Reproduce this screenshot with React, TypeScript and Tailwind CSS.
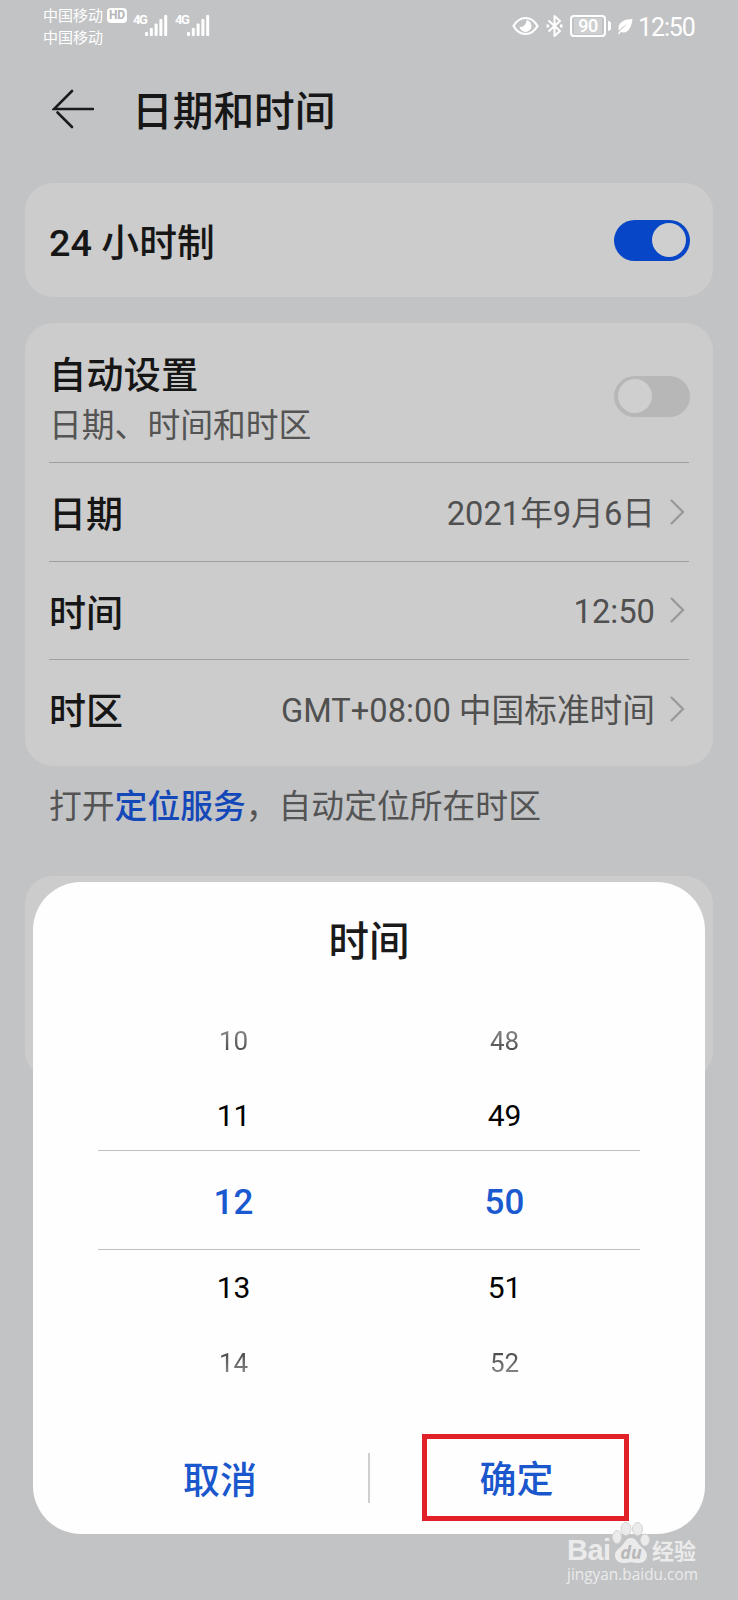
import type { ReactNode } from 'react'

const hours = ['10', '11', '12', '13', '14']
const minutes = ['48', '49', '50', '51', '52']

// one entry per wheel position, from top to bottom
const wheelStyles = [
  'h-[66px] text-[26px] text-transparent bg-clip-text bg-linear-to-b from-[#999] from-25% to-[#333] to-80%',
  'h-[84px] text-[30px] text-black',
  'h-[88px] text-[35px] font-medium text-[#1a59d0]',
  'h-[84px] text-[30px] text-black',
  'h-[66px] text-[26px] text-transparent bg-clip-text bg-linear-to-b from-[#333] from-20% to-[#999] to-75%',
]

function SignalIcon() {
  return (
    <div className="flex h-[22px] w-[35px]">
      <span className="-mt-px h-3 w-[12px] font-[Roboto] text-[13px] leading-[13px] font-bold tracking-[-1.500px]">4G</span>
      <svg width="23" height="22" viewBox="0 0 23 22" fill="#fff">
        <rect x="0" y="18" width="3" height="4" rx="1" />
        <rect x="4.800" y="14" width="3" height="8" rx="1" />
        <rect x="9.600" y="9.500" width="3" height="12.500" rx="1" />
        <rect x="14.400" y="5" width="3" height="17" rx="1" />
        <rect x="19.200" y="1" width="3" height="21" rx="1" />
      </svg>
    </div>
  )
}

function StatusBar() {
  return (
    <div className="flex h-[52px] justify-between pl-[43px] pr-[42px] text-white">
      <div className="flex">
        <div className="flex flex-col pt-1 text-[15px] leading-[22px]">
          <div className="flex items-center">
            <span>中国移动</span>
            <span className="ml-1 flex h-[15px] w-5 items-center justify-center rounded-[4px] bg-white font-[Roboto] text-[12px] leading-none font-bold text-[#b4b5b7]">HD</span>
          </div>
          <span>中国移动</span>
        </div>
        <div className="ml-[6px] flex gap-[7px] pt-[14px]">
          <SignalIcon />
          <SignalIcon />
        </div>
      </div>
      <div className="flex h-[52px] items-center">
        <svg width="27" height="20" viewBox="0 0 27 20" fill="none">
          <path d="M1.500 10C4.500 4.800 8.800 2 13.500 2s9 2.800 12 8c-3 5.200-7.300 8-12 8s-9-2.800-12-8Z" stroke="#fff" strokeWidth="2.200" />
          <path d="M14.500 4a6 6 0 1 1-7 6.500c3 1.500 7-1.500 7-6.500Z" fill="#fff" />
        </svg>
        <svg className="ml-[7px]" width="17" height="24" viewBox="0 0 17 24" fill="none" stroke="#fff" strokeWidth="2" strokeLinejoin="round">
          <path d="M2.500 6.500L14 17l-5.500 5V2L14 7 2.500 17.500" />
          <path d="M.5 12H3M14 12h2.500" strokeWidth="2.800" />
        </svg>
        <div className="ml-[7px] flex h-[22px] w-9 items-center justify-center rounded-[4px] border-2 border-white">
          <span className="flex h-4 w-[28px] items-center justify-center bg-white/20 font-[Roboto] text-[18px] leading-none font-medium tracking-[-0.500px]">90</span>
        </div>
        <div className="ml-[2px] h-[10px] w-[3px] rounded-r-sm bg-white" />
        <svg className="ml-[6px]" width="16" height="17" viewBox="0 0 16 17">
          <path d="M15.500 1C9 .8 1.500 3.500 1.500 10c0 1 .2 2 .6 2.800C4.200 9.800 7 8 10.500 6.500 7 9 3.500 11.500 1 15.500l1.200.7 1.500-2.200C11.500 16.500 14.500 9 15.500 1Z" fill="#fff" />
        </svg>
        <span className="ml-[5px] w-[58px] pt-[3px] font-[Roboto] text-[25px] leading-none tracking-[-1.100px] whitespace-nowrap">12:50</span>
      </div>
    </div>
  )
}

function Toggle({ on }: { on?: boolean }) {
  return (
    <div
      className={`-mr-px flex h-[41px] w-[76px] items-center rounded-full px-1 ${
        on ? 'justify-end bg-[#0746c6]' : 'justify-start bg-[#b7b7b7]'
      }`}
    >
      <div className="size-[34px] rounded-full bg-[#cfcfcf]" />
    </div>
  )
}

function Row({ label, value }: { label: string; value: string }) {
  return (
    <div className="flex h-[98.500px] items-center justify-between border-t border-[#9f9f9f]">
      <span className="pt-[2px] text-[37px] font-medium text-[#161616]">{label}</span>
      <div className="flex items-center text-[#505050]">
        <span className="pt-1 font-[Roboto,'Noto_Sans_CJK_SC'] text-[32.700px] leading-[40px]">{value}</span>
        <svg className="ml-[14px] mr-1" width="16" height="28" viewBox="0 0 16 28" fill="none">
          <path d="M2 2l12 12L2 26" stroke="#999" strokeWidth="2.300" />
        </svg>
      </div>
    </div>
  )
}

function Card({ className, children }: { className: string; children?: ReactNode }) {
  return <div className={`mx-[25px] rounded-[28px] bg-[#ccc] px-6 ${className}`}>{children}</div>
}

function Wheel({ values }: { values: string[] }) {
  return (
    <div className="flex w-[271px] flex-col items-center font-[Roboto]">
      {values.map((value, i) => (
        <div key={value} className={`flex items-center leading-none ${wheelStyles[i]}`}>
          {value}
        </div>
      ))}
    </div>
  )
}

function TimeDialog() {
  return (
    <div className="absolute top-[882px] left-[33px] h-[652px] w-[672px] rounded-[48px] bg-[#fefefe]">
      <h2 className="pt-[27px] text-center text-[40.500px] leading-[60px] font-medium text-[#1a1a1a]">时间</h2>
      <div className="relative mt-[39px] flex justify-center">
        <Wheel values={hours} />
        <Wheel values={minutes} />
        <div className="absolute top-[142px] left-[65px] h-[100px] w-[542px] border-y-[1.500px] border-[#c0c0c0]" />
      </div>
      <div className="mt-[38px] flex h-[87px] items-center text-[37px] font-medium text-[#1a57cd]">
        <button className="ml-[150px] w-[74px] pt-px leading-none whitespace-nowrap">取消</button>
        <div className="ml-[111px] h-[50px] w-[2px] bg-[#cfcfcf]" />
        <button className="ml-[52px] h-[87px] w-[207px] border-[5px] border-[#e22028] pr-[18px] leading-none">确定</button>
      </div>
    </div>
  )
}

function Watermark() {
  return (
    <div className="absolute top-[1520px] left-[567px] w-[134px] text-[#ebebeb]">
      <div className="flex h-[44px] items-end">
        <span className="w-[45px] font-['Liberation_Sans'] text-[29px] leading-[28px] font-bold tracking-[-0.500px]">Bai</span>
        <svg width="38" height="42" viewBox="0 0 38 42" fill="#ebebeb">
          <g stroke="#d3d3d3" strokeWidth="1">
            <ellipse cx="5" cy="15" rx="4.500" ry="6.500" />
            <ellipse cx="14" cy="7" rx="5" ry="6.500" />
            <ellipse cx="25.500" cy="7" rx="5" ry="6.500" />
            <ellipse cx="33" cy="18" rx="4.500" ry="6" />
          </g>
          <path d="M19 16c-5 0-6 4.500-9.500 8S3 29 3 33.500 6.500 41 11 41c3 0 5-.8 8-.8s5 .8 8 .8c4.500 0 8-3 8-7.500s-3-6-6.500-9.500S24 16 19 16Z" />
          <text x="19" y="37" textAnchor="middle" fontFamily="Open Sans, sans-serif" fontSize="18" fontStyle="italic" fontWeight="700" fill="#b8b8b9">du</text>
        </svg>
        <span className="ml-[2px] text-[22px] leading-[29px] font-bold whitespace-nowrap">经验</span>
      </div>
      <div className="font-['Open_Sans'] text-[15.400px] leading-[21px] whitespace-nowrap">jingyan.baidu.com</div>
    </div>
  )
}

export default function App() {
  return (
    <div className="relative h-[1600px] w-[738px] overflow-hidden bg-[#c2c3c5] font-['Noto_Sans_CJK_SC',sans-serif]">
      <StatusBar />
      <header className="flex h-[131px] items-center pb-[17px] pl-[52px]">
        <svg width="42" height="40" viewBox="0 0 42 40" fill="none" stroke="#1b1b1b" strokeWidth="2.600" strokeLinecap="round">
          <path d="M20 2L2 20h39" />
          <path d="M5.500 23.500L20 38" />
        </svg>
        <h1 className="ml-[38px] text-[40.700px] font-medium text-[#171717]">日期和时间</h1>
      </header>

      <Card className="flex h-[114px] items-center justify-between">
        <span className="pt-[5px] font-[Roboto,'Noto_Sans_CJK_SC'] text-[37.800px] leading-[44px] font-medium text-[#161616]">24 小时制</span>
        <Toggle on />
      </Card>

      <Card className="mt-[26px] h-[443px]">
        <div className="flex h-[139px] items-center justify-between">
          <div className="pt-[10px]">
            <div className="text-[37.300px] leading-[50px] font-medium text-[#161616]">自动设置</div>
            <div className="text-[32.800px] leading-[50px] text-[#545454]">日期、时间和时区</div>
          </div>
          <div className="pt-[7px]">
            <Toggle />
          </div>
        </div>
        <Row label="日期" value="2021年9月6日" />
        <Row label="时间" value="12:50" />
        <Row label="时区" value="GMT+08:00 中国标准时间" />
      </Card>

      <p className="mt-[14px] h-[96px] pl-[49px] text-[32.800px] leading-[48px] text-[#545454]">
        打开<span className="font-medium text-[#1448b9]">定位服务</span>，自动定位所在时区
      </p>

      <Card className="h-[203px]" />

      <TimeDialog />
      <Watermark />
    </div>
  )
}
